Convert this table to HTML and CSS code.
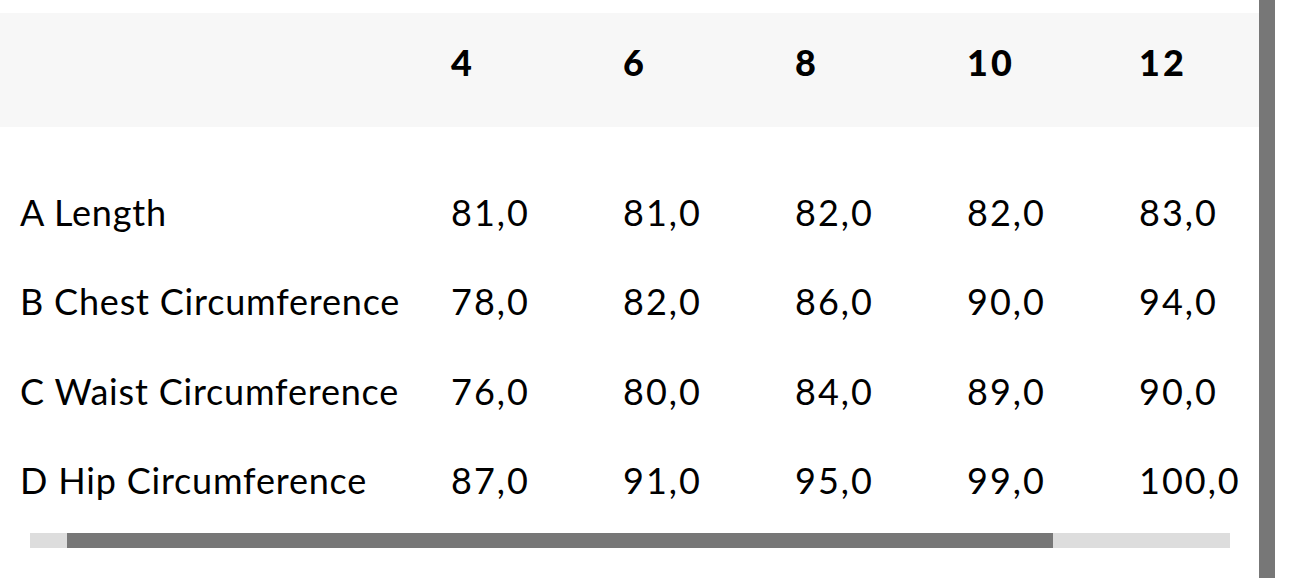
FILE: index.html
```html
<!DOCTYPE html>
<html lang="en">
<head>
<meta charset="utf-8">
<title>Size chart</title>
<link rel="stylesheet" href="styles.css">
</head>
<body>
<div class="page">
  <div class="content">
    <div class="table-scroll">
      <div class="row head">
        <div class="cell label"></div>
        <div class="cell">4</div>
        <div class="cell">6</div>
        <div class="cell">8</div>
        <div class="cell">10</div>
        <div class="cell">12</div>
      </div>
      <div class="body">
        <div class="row">
          <div class="cell label">A Length</div>
          <div class="cell">81,0</div>
          <div class="cell">81,0</div>
          <div class="cell">82,0</div>
          <div class="cell">82,0</div>
          <div class="cell">83,0</div>
        </div>
        <div class="row">
          <div class="cell label">B Chest Circumference</div>
          <div class="cell">78,0</div>
          <div class="cell">82,0</div>
          <div class="cell">86,0</div>
          <div class="cell">90,0</div>
          <div class="cell">94,0</div>
        </div>
        <div class="row">
          <div class="cell label">C Waist Circumference</div>
          <div class="cell">76,0</div>
          <div class="cell">80,0</div>
          <div class="cell">84,0</div>
          <div class="cell">89,0</div>
          <div class="cell">90,0</div>
        </div>
        <div class="row">
          <div class="cell label">D Hip Circumference</div>
          <div class="cell">87,0</div>
          <div class="cell">91,0</div>
          <div class="cell">95,0</div>
          <div class="cell">99,0</div>
          <div class="cell">100,0</div>
        </div>
      </div>
    </div>
    <div class="hscroll"><div class="hthumb"></div></div>
  </div>
  <div class="vbar"></div>
</div>
</body>
</html>
```

FILE: styles.css
```css
* { box-sizing: border-box; }
html, body { margin: 0; padding: 0; background: #fff; }
body {
  font-family: "Lato", "Liberation Sans", sans-serif;
  color: #000;
  width: 1290px;
  height: 578px;
  overflow: hidden;
}
.page {
  display: flex;
  height: 578px;
}
.content {
  width: 1259px;
  padding-top: 13px;
  display: flex;
  flex-direction: column;
}
.table-scroll {
  overflow: hidden;
}
.row {
  display: grid;
  grid-template-columns: 451px repeat(5, 172px);
  align-items: center;
  white-space: nowrap;
}
.cell {
  font-size: 36px;
  line-height: 36px;
  letter-spacing: 2px;
}
.cell.label {
  padding-left: 20px;
  letter-spacing: 0.8px;
}
.head {
  background: #f7f7f7;
  height: 114px;
  width: 1259px;
}
.head .cell {
  font-weight: 900;
  letter-spacing: 3px;
  padding-bottom: 16px;
}
.body { padding-top: 40px; }
.body .row { height: 89.5px; }
.hscroll {
  margin: 8px 29px 0 30px;
  height: 15px;
  background: #dddddd;
  position: relative;
}
.hthumb {
  position: absolute;
  left: 37px;
  top: 0;
  width: 986px;
  height: 15px;
  background: #777777;
}
.vbar {
  width: 16px;
  height: 578px;
  background: #777777;
}
```
